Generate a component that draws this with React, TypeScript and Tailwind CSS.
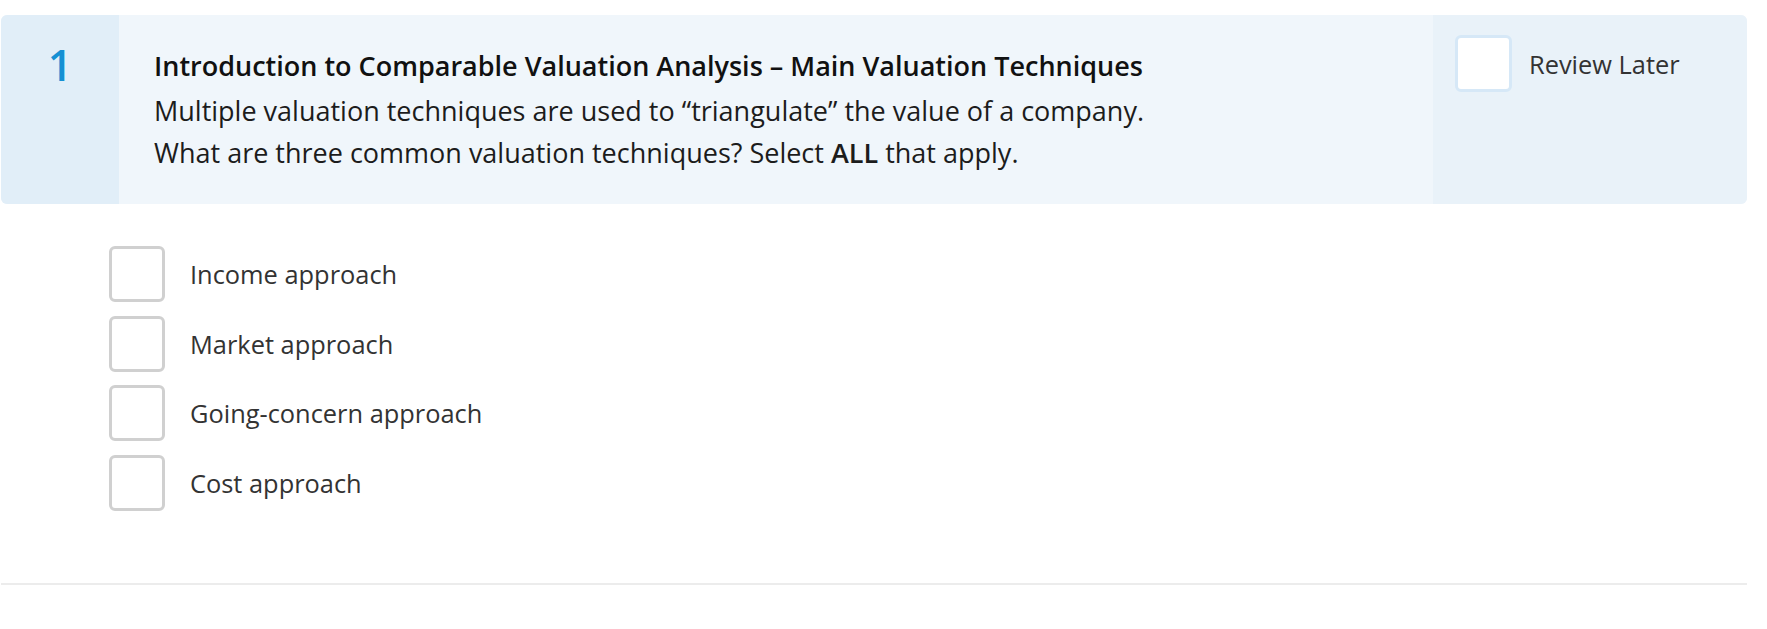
import React, { useState } from "react";

const options = [
  "Income approach",
  "Market approach",
  "Going-concern approach",
  "Cost approach",
];

const App = () => {
  const [checked, setChecked] = useState<string[]>([]);
  const [review, setReview] = useState(false);

  const toggle = (opt: string) => {
    setChecked((prev) =>
      prev.includes(opt) ? prev.filter((o) => o !== opt) : [...prev, opt]
    );
  };

  return (
    <div
      className="min-h-screen bg-white pl-[1px] pr-[20px] pt-[15px]"
      style={{ fontFamily: '"Open Sans", "Liberation Sans", sans-serif' }}
    >
      {/* question header */}
      <div className="flex rounded-md overflow-hidden bg-[#f0f6fb]">
        <div className="w-[118px] shrink-0 bg-[#e1eef8] flex justify-center pt-[25px]">
          <span className="text-[43px] leading-[50px] font-semibold text-[#1590d3]">1</span>
        </div>
        <div className="flex-1 pl-[35px] pt-[30px] pb-[30px]">
          <p className="text-[27px] leading-[42px] mb-[3px] font-semibold text-[#111]">
            Introduction to Comparable Valuation Analysis – Main Valuation Techniques
          </p>
          <p className="text-[27px] leading-[42px] text-[#1c1c1c]">
            Multiple valuation techniques are used to “triangulate” the value of a company.
          </p>
          <p className="text-[27px] leading-[42px] text-[#1c1c1c]">
            What are three common valuation techniques? Select <span className="font-semibold">ALL</span> that apply.
          </p>
        </div>
        <div className="w-[314px] shrink-0 bg-[#e9f2f9] pl-[22px] pt-[20px]">
          <label className="flex items-center gap-[17px] cursor-pointer">
            <button
              onClick={() => setReview(!review)}
              className="w-[57px] h-[57px] rounded-md border-[3px] border-[#d6e8f7] bg-white"
            />
            <span className="text-[25.4px] text-[#333] leading-[32px]">Review Later</span>
          </label>
        </div>
      </div>

      {/* options */}
      <div className="pl-[108px] pt-[42px] flex flex-col gap-[13.5px]">
        {options.map((opt) => (
          <label key={opt} className="flex items-center gap-[25px] cursor-pointer">
            <button
              onClick={() => toggle(opt)}
              className={`w-[56px] h-[56px] rounded-md border-[3px] border-[#d0d0d0] ${
                checked.includes(opt) ? "bg-[#1590d3]" : "bg-white"
              }`}
            />
            <span className="text-[25.4px] text-[#333] leading-[32px]">{opt}</span>
          </label>
        ))}
      </div>

      <div className="mt-[72px] h-[2px] bg-[#ececec]" />
    </div>
  );
};

export default App;
